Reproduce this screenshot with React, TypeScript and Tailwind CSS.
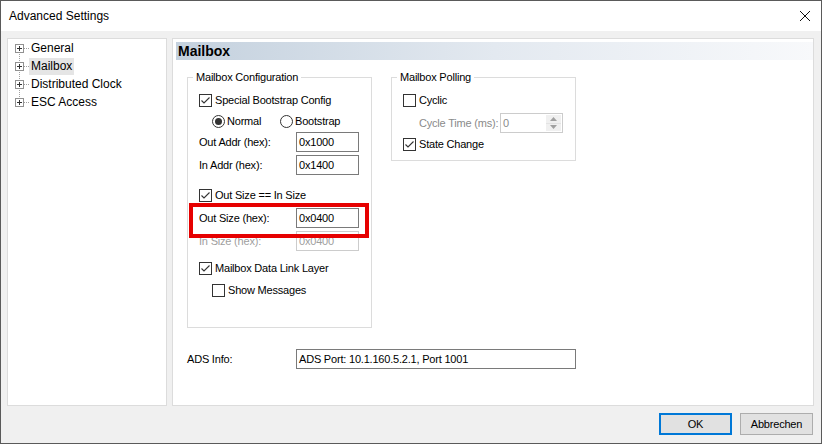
import clsx from "clsx";

function CheckBox({ checked = false, label, className = "" }: { checked?: boolean; label: string; className?: string }) {
  return (
    <div className={clsx("flex items-center h-[13px]", className)}>
      <span className="w-[13px] h-[13px] shrink-0 border border-[#333333] bg-white flex items-center justify-center">
        {checked && (
          <svg width="11" height="11" viewBox="0 0 11 11">
            <path d="M1.5 5.5 L4 8 L9.5 2.5" fill="none" stroke="#333333" strokeWidth="1.1" />
          </svg>
        )}
      </span>
      <span className="ml-[3px] leading-[13px] whitespace-nowrap">{label}</span>
    </div>
  );
}

function Radio({ checked = false, label, className = "" }: { checked?: boolean; label: string; className?: string }) {
  return (
    <div className={clsx("flex items-center h-[13px]", className)}>
      <span className="w-[13px] h-[13px] shrink-0 rounded-full border border-[#333333] bg-white flex items-center justify-center">
        {checked && <span className="w-[7px] h-[7px] rounded-full bg-[#333333]" />}
      </span>
      <span className="ml-[2px] leading-[13px] whitespace-nowrap">{label}</span>
    </div>
  );
}

function TextBox({ value, disabled = false, className = "" }: { value: string; disabled?: boolean; className?: string }) {
  return (
    <div
      className={clsx(
        "h-[20px] bg-white border flex items-center pl-[2px] whitespace-nowrap",
        disabled ? "border-[#cccccc] text-[#a0a0a0]" : "border-[#7a7a7a]",
        className
      )}
    >
      {value}
    </div>
  );
}

function FieldRow({ label, value, disabled = false, className = "" }: { label: string; value: string; disabled?: boolean; className?: string }) {
  return (
    <div className={clsx("flex items-center h-[20px]", className)}>
      <span className={clsx("w-[97px] whitespace-nowrap", disabled && "text-[#a0a0a0]")}>{label}</span>
      <TextBox value={value} disabled={disabled} className="w-[63px]" />
    </div>
  );
}

function GroupBox({ title, className = "", children }: { title: string; className?: string; children: React.ReactNode }) {
  return (
    <div className={clsx("relative border border-[#dcdcdc] pl-[11px] pt-[16px] shrink-0", className)}>
      <span className="absolute -top-[8px] left-[5px] bg-white px-[3px] leading-[14px] whitespace-nowrap">{title}</span>
      {children}
    </div>
  );
}

function PlusBox() {
  return (
    <span className="w-[9px] h-[9px] shrink-0 border border-[#919191] bg-white flex items-center justify-center relative z-10">
      <svg width="7" height="7" viewBox="0 0 7 7" shapeRendering="crispEdges">
        <path d="M1 3.5 H6 M3.5 1 V6" stroke="#333333" strokeWidth="1" />
      </svg>
    </span>
  );
}

const treeItems = ["General", "Mailbox", "Distributed Clock", "ESC Access"];

function Tree() {
  return (
    <div className="w-[160px] shrink-0 bg-white border border-[#dcdcdc] relative text-[12px]">
      {/* connector line */}
      <div className="absolute left-[11px] top-[13px] h-[45px] border-l border-dotted border-[#a0a0a0]" />
      {treeItems.map((item) => (
        <div key={item} className="flex items-center h-[18px]">
          <span className="ml-[7px]">
            <PlusBox />
          </span>
          <span className="w-[5px] border-t border-dotted border-[#a0a0a0]" />
          <span className={clsx("px-[2px] leading-[17px] whitespace-nowrap", item === "Mailbox" && "bg-[#e5e5e5]")}>{item}</span>
        </div>
      ))}
    </div>
  );
}

function SpinBox() {
  return (
    <div className="w-[63px] h-[20px] border border-[#cccccc] bg-white flex">
      <span className="flex-1 pl-[2px] flex items-center text-[#8a8a8a]">0</span>
      <div className="w-[17px] flex flex-col p-px">
        <div className="flex-1 bg-[#f0f0f0] border-b border-[#e3e3e3] flex items-center justify-center">
          <svg width="7" height="4" viewBox="0 0 7 4">
            <path d="M0 4 L3.5 0 L7 4 Z" fill="#a0a0a0" />
          </svg>
        </div>
        <div className="flex-1 bg-[#f0f0f0] flex items-center justify-center">
          <svg width="7" height="4" viewBox="0 0 7 4">
            <path d="M0 0 L3.5 4 L7 0 Z" fill="#a0a0a0" />
          </svg>
        </div>
      </div>
    </div>
  );
}

function MailboxPanel() {
  return (
    <div className="flex-1 bg-white border border-[#dcdcdc] flex flex-col text-[11px] tracking-[-0.2px]">
      {/* Header */}
      <div className="mt-[3px] ml-[3px] h-[18px] pl-[2px] flex items-center bg-gradient-to-r from-[#c4d1de] via-[#e3e9f0] to-[#f8f9fb]">
        <span className="text-[14px] font-bold tracking-normal">Mailbox</span>
      </div>

      <div className="flex items-start mt-[17px] ml-[14px]">
        {/* Mailbox Configuration */}
        <GroupBox title="Mailbox Configuration" className="w-[185px] h-[251px]">
          <CheckBox checked label="Special Bootstrap Config" />
          <div className="flex mt-[8px] ml-[13px]">
            <Radio checked label="Normal" className="w-[68px]" />
            <Radio label="Bootstrap" />
          </div>
          <FieldRow label="Out Addr (hex):" value="0x1000" className="mt-[4px]" />
          <FieldRow label="In Addr (hex):" value="0x1400" className="mt-[3px]" />
          <CheckBox checked label="Out Size == In Size" className="mt-[14px]" />
          <FieldRow label="Out Size (hex):" value="0x0400" className="mt-[6px]" />
          <FieldRow label="In Size (hex):" value="0x0400" disabled className="mt-[3px]" />
          <CheckBox checked label="Mailbox Data Link Layer" className="mt-[11px]" />
          <CheckBox label="Show Messages" className="mt-[9px] ml-[13px]" />

          {/* highlight */}
          <div className="absolute left-[1px] top-[125px] w-[180px] h-[35px] border-4 border-[#e60000]" />
        </GroupBox>

        {/* Mailbox Polling */}
        <GroupBox title="Mailbox Polling" className="ml-[19px] w-[185px] h-[84px]">
          <CheckBox label="Cyclic" />
          <div className="flex items-center mt-[6px] ml-[16px]">
            <span className="w-[81px] text-[#8a8a8a] whitespace-nowrap">Cycle Time (ms):</span>
            <SpinBox />
          </div>
          <CheckBox checked label="State Change" className="mt-[5px]" />
        </GroupBox>
      </div>

      {/* ADS Info */}
      <div className="flex items-center mt-[21px] ml-[14px]">
        <span className="w-[109px]">ADS Info:</span>
        <TextBox value="ADS Port: 10.1.160.5.2.1, Port 1001" className="w-[280px]" />
      </div>
    </div>
  );
}

export default function App() {
  return (
    <div className="w-[822px] h-[444px] flex flex-col border border-[#5a5a5a] bg-[#f0f0f0] text-black font-['Liberation_Sans',Arial,sans-serif] select-none">
      {/* Title bar */}
      <div className="h-[30px] shrink-0 bg-white flex items-center justify-between pl-[8px] pr-[11px] text-[12px]">
        <span>Advanced Settings</span>
        <svg width="10" height="10" viewBox="0 0 10 10">
          <path d="M0 0 L10 10 M10 0 L0 10" stroke="#111111" strokeWidth="1" />
        </svg>
      </div>

      <div className="flex-1 flex flex-col pt-[7px] pl-[6px] pr-[7px] pb-[8px]">
        <div className="flex gap-[5px] h-[368px]">
          <Tree />
          <MailboxPanel />
        </div>

        {/* Buttons */}
        <div className="flex justify-end gap-[8px] mt-[7px] mr-[1px] text-[11px] tracking-[-0.2px]">
          <button className="w-[73px] h-[22px] bg-[#e1e1e1] border-2 border-[#0078d7]">OK</button>
          <button className="w-[73px] h-[22px] bg-[#e1e1e1] border border-[#adadad]">Abbrechen</button>
        </div>
      </div>
    </div>
  );
}
